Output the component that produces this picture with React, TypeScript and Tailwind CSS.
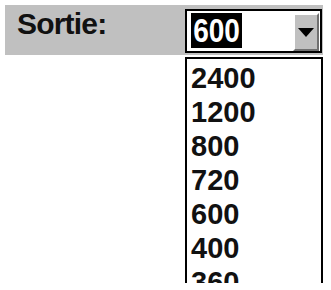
import React from 'react';

const options = ['2400', '1200', '800', '720', '600', '400', '360'];

const App: React.FC = () => {
  return (
    <div
      className="w-[331px] h-[290px] bg-white overflow-hidden pt-[5px] pl-[5px]"
      style={{ fontFamily: '"Liberation Sans", Arial, sans-serif' }}
    >
      {/* toolbar row */}
      <div className="w-[318px] h-[50px] bg-[#c0c0c0] flex items-start">
        <span className="ml-[12px] mt-[2px] text-[30px] leading-[34px] font-bold tracking-[-0.8px] text-[#111]">
          Sortie:
        </span>

        {/* combo box */}
        <div className="ml-auto mr-[1px] mt-[4px] w-[137px] h-[44px] border-2 border-black bg-white flex items-start">
          <div className="ml-[4px] mt-[2px] w-[51px] h-[35px] bg-black text-white flex items-center justify-center">
            <span className="text-[28px] leading-[28px] font-bold scale-y-[1.2]">600</span>
          </div>
          <div className="ml-auto mr-[1px] mt-[2px] w-[26px] h-[38px] bg-[#c0c0c0] border-t-2 border-l-2 border-white border-r-2 border-b-2 border-r-[#707070] border-b-[#707070] flex items-center justify-center">
            <svg width="16" height="9" viewBox="0 0 16 9">
              <path d="M0 0 H16 L8 9 Z" fill="#000" />
            </svg>
          </div>
        </div>
      </div>

      {/* open list */}
      <div className="ml-[180px] mt-[2px] w-[138px] h-[226px] border-2 border-b-0 border-black bg-white overflow-hidden pl-[4px] pt-[2px]">
        {options.map((o) => (
          <div key={o} className="text-[29px] leading-[34px] font-bold text-[#111]">
            {o}
          </div>
        ))}
      </div>
    </div>
  );
};

export default App;
